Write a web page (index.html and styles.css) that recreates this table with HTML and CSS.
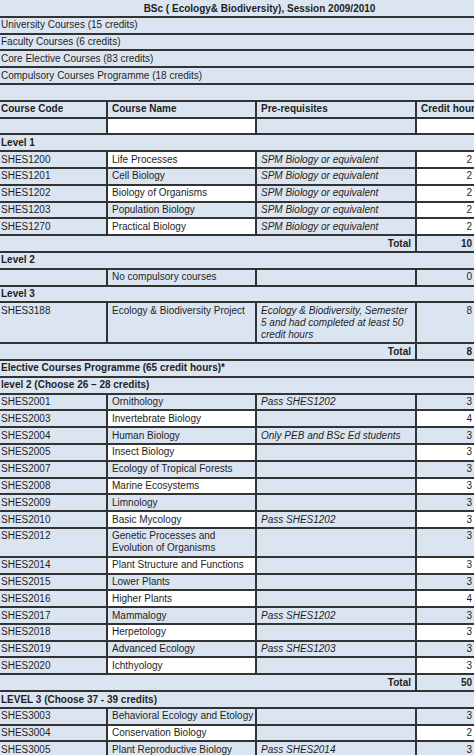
FILE: index.html
```html
<!DOCTYPE html>
<html lang="en">
<head>
<meta charset="utf-8">
<title>BSc (Ecology &amp; Biodiversity) Programme</title>
<link rel="stylesheet" href="styles.css">
</head>
<body>
<div class="page">
<table class="grid">
  <colgroup>
    <col class="c-code">
    <col class="c-name">
    <col class="c-pre">
    <col class="c-cr">
  </colgroup>
  <tbody>
    <tr><td colspan="4" class="title">BSc ( Ecology&amp; Biodiversity), Session 2009/2010</td></tr>
    <tr><td colspan="4">University Courses (15 credits)</td></tr>
    <tr><td colspan="4">Faculty Courses (6 credits)</td></tr>
    <tr><td colspan="4">Core Elective Courses (83 credits)</td></tr>
    <tr><td colspan="4">Compulsory Courses Programme (18 credits)</td></tr>
    <tr><td colspan="4">&nbsp;</td></tr>
    <tr class="head"><td>Course Code</td><td>Course Name</td><td>Pre-requisites</td><td class="clip">Credit hours</td></tr>
    <tr><td>&nbsp;</td><td class="w">&nbsp;</td><td>&nbsp;</td><td class="w">&nbsp;</td></tr>

    <tr><td colspan="4" class="sec">Level 1</td></tr>
    <tr><td>SHES1200</td><td class="w">Life Processes</td><td class="pre">SPM Biology or equivalent</td><td class="num w">2</td></tr>
    <tr><td>SHES1201</td><td>Cell Biology</td><td class="pre">SPM Biology or equivalent</td><td class="num w">2</td></tr>
    <tr><td>SHES1202</td><td class="w">Biology of Organisms</td><td class="pre">SPM Biology or equivalent</td><td class="num w">2</td></tr>
    <tr><td>SHES1203</td><td>Population Biology</td><td class="pre">SPM Biology or equivalent</td><td class="num w">2</td></tr>
    <tr><td>SHES1270</td><td class="w">Practical Biology</td><td class="pre">SPM Biology or equivalent</td><td class="num w">2</td></tr>
    <tr class="total"><td colspan="3">Total</td><td class="num">10</td></tr>

    <tr><td colspan="4" class="sec">Level 2</td></tr>
    <tr><td>&nbsp;</td><td>No compulsory courses</td><td>&nbsp;</td><td class="num">0</td></tr>

    <tr><td colspan="4" class="sec">Level 3</td></tr>
    <tr><td>SHES3188</td><td>Ecology &amp; Biodiversity Project</td><td class="pre">Ecology &amp; Biodiversity, Semester<br>5 and had completed at least 50<br>credit hours</td><td class="num">8</td></tr>
    <tr class="total"><td colspan="3">Total</td><td class="num">8</td></tr>

    <tr><td colspan="4" class="sec">Elective Courses Programme (65 credit hours)*</td></tr>
    <tr><td colspan="4" class="sec">level 2 (Choose 26 – 28 credits)</td></tr>
    <tr><td>SHES2001</td><td>Ornithology</td><td class="pre">Pass SHES1202</td><td class="num">3</td></tr>
    <tr><td>SHES2003</td><td class="w">Invertebrate Biology</td><td class="pre"></td><td class="num w">4</td></tr>
    <tr><td>SHES2004</td><td>Human Biology</td><td class="pre">Only PEB and BSc Ed students</td><td class="num">3</td></tr>
    <tr><td>SHES2005</td><td class="w">Insect Biology</td><td class="pre"></td><td class="num w">3</td></tr>
    <tr><td>SHES2007</td><td>Ecology of Tropical Forests</td><td class="pre"></td><td class="num">3</td></tr>
    <tr><td>SHES2008</td><td class="w">Marine Ecosystems</td><td class="pre"></td><td class="num w">3</td></tr>
    <tr><td>SHES2009</td><td>Limnology</td><td class="pre"></td><td class="num">3</td></tr>
    <tr><td>SHES2010</td><td class="w">Basic Mycology</td><td class="pre">Pass SHES1202</td><td class="num w">3</td></tr>
    <tr><td>SHES2012</td><td>Genetic Processes and<br>Evolution of Organisms</td><td class="pre"></td><td class="num">3</td></tr>
    <tr><td>SHES2014</td><td class="w">Plant Structure and Functions</td><td class="pre"></td><td class="num w">3</td></tr>
    <tr><td>SHES2015</td><td>Lower Plants</td><td class="pre"></td><td class="num">3</td></tr>
    <tr><td>SHES2016</td><td class="w">Higher Plants</td><td class="pre"></td><td class="num w">4</td></tr>
    <tr><td>SHES2017</td><td>Mammalogy</td><td class="pre">Pass SHES1202</td><td class="num">3</td></tr>
    <tr><td>SHES2018</td><td class="w">Herpetology</td><td class="pre"></td><td class="num w">3</td></tr>
    <tr><td>SHES2019</td><td>Advanced Ecology</td><td class="pre">Pass SHES1203</td><td class="num">3</td></tr>
    <tr><td>SHES2020</td><td class="w">Ichthyology</td><td class="pre"></td><td class="num w">3</td></tr>
    <tr class="total"><td colspan="3">Total</td><td class="num">50</td></tr>

    <tr><td colspan="4" class="sec">LEVEL 3 (Choose 37 - 39 credits)</td></tr>
    <tr><td>SHES3003</td><td class="clip">Behavioral Ecology and Etology</td><td class="pre"></td><td class="num">3</td></tr>
    <tr><td>SHES3004</td><td class="w">Conservation Biology</td><td class="pre"></td><td class="num w">2</td></tr>
    <tr><td>SHES3005</td><td>Plant Reproductive Biology</td><td class="pre">Pass SHES2014</td><td class="num">3</td></tr>
  </tbody>
</table>
</div>
</body>
</html>
```

FILE: styles.css
```css
html, body {
  margin: 0;
  padding: 0;
  background: #ffffff;
  overflow: hidden;
}

.page {
  width: 474px;
  height: 755px;
  overflow: hidden;
  background: #dbe5f1;
}

.grid {
  table-layout: fixed;
  width: 481px;
  margin: -1px 0 0 -5px;
  border-collapse: collapse;
  font-family: "Liberation Sans", Arial, Helvetica, sans-serif;
  font-size: 10px;
  line-height: 12px;
  color: #1e1e1e;
}

.c-code { width: 111px; }
.c-name { width: 149px; }
.c-pre { width: 160px; }
.c-cr { width: 61px; }

.grid td {
  background: #dbe5f1;
  border: 2px solid #333333;
  padding: 1.5px 4px 1.3px 4px;
  vertical-align: top;
  text-align: left;
  white-space: normal;
}

.grid td.w {
  background: #ffffff;
}

.grid td.pre {
  font-style: italic;
}

.grid td.num {
  text-align: right;
}

.grid td.clip {
  white-space: nowrap;
  overflow: hidden;
}

.grid td.title {
  font-weight: bold;
  text-align: center;
  padding-left: 50px;
  border-top-color: #dbe5f1;
}

.grid td.sec,
.head td,
.total td {
  font-weight: bold;
}

.total td {
  text-align: right;
}
```
